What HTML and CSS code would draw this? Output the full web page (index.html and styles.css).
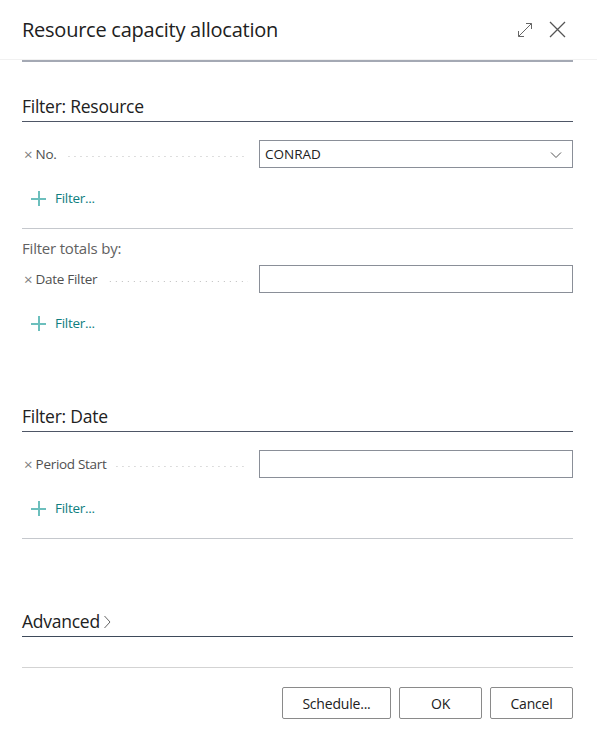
FILE: index.html
```html
<!DOCTYPE html>
<html>
<head>
<meta charset="utf-8">
<link rel="stylesheet" href="styles.css">
</head>
<body>
<div class="dialog">
  <div class="header">
    <div class="title">Resource capacity allocation</div>
    <div class="header-icons">
      <svg class="icon-expand" width="16" height="16" viewBox="0 0 16 16"><path d="M1.5 14.5 L14.5 1.5 M9 1.5 H14.5 V7 M1.5 9 V14.5 H7" fill="none" stroke="#666" stroke-width="1"/></svg>
      <svg class="icon-close" width="17" height="17" viewBox="0 0 17 17"><path d="M1 1 L16 16 M16 1 L1 16" fill="none" stroke="#555" stroke-width="1.3"/></svg>
    </div>
  </div>
  <div class="content">
    <div class="top-rule"></div>

    <div class="section first">
      <div class="section-title">Filter: Resource</div>
      <div class="row">
        <div class="label"><span class="x">×</span><span class="label-text">No.</span><span class="leader"></span></div>
        <div class="field select"><span class="value">CONRAD</span>
          <svg class="chev" width="12" height="8" viewBox="0 0 12 8"><path d="M1 1.5 L6 6.5 L11 1.5" fill="none" stroke="#555" stroke-width="1"/></svg>
        </div>
      </div>
      <div class="add-filter"><span class="plus"></span><span class="add-text">Filter...</span></div>
      <div class="rule"></div>
      <div class="subhead">Filter totals by:</div>
      <div class="row tight">
        <div class="label"><span class="x">×</span><span class="label-text">Date Filter</span><span class="leader"></span></div>
        <div class="field"></div>
      </div>
      <div class="add-filter"><span class="plus"></span><span class="add-text">Filter...</span></div>
    </div>

    <div class="section second">
      <div class="section-title">Filter: Date</div>
      <div class="row">
        <div class="label"><span class="x">×</span><span class="label-text">Period Start</span><span class="leader"></span></div>
        <div class="field"></div>
      </div>
      <div class="add-filter"><span class="plus"></span><span class="add-text">Filter...</span></div>
      <div class="rule"></div>
    </div>

    <div class="section advanced">
      <div class="section-title adv">Advanced<svg class="adv-chev" width="8" height="14" viewBox="0 0 8 14"><path d="M1.5 1 L7 7 L1.5 13" fill="none" stroke="#666" stroke-width="1"/></svg></div>
    </div>

    <div class="footer-rule"></div>
    <div class="buttons">
      <button class="btn schedule">Schedule...</button>
      <button class="btn ok">OK</button>
      <button class="btn cancel">Cancel</button>
    </div>
  </div>
</div>
</body>
</html>
```

FILE: styles.css
```css
html, body {
  margin: 0;
  padding: 0;
  background: #ffffff;
}
body {
  font-family: "Open Sans", "Noto Sans", sans-serif;
  color: #212121;
  width: 597px;
  height: 741px;
  overflow: hidden;
}
.dialog {
  width: 597px;
}
.header {
  height: 59px;
  display: flex;
  align-items: center;
  justify-content: space-between;
  padding: 0 31px 0 22px;
  border-bottom: 1px solid #f1f1f1;
}
.title {
  font-size: 20px;
  color: #212121;
  letter-spacing: -0.25px;
  margin-top: 0;
}
.header-icons {
  display: flex;
  align-items: center;
  gap: 16px;
}
.icon-expand { margin-top: 1px; }
.content {
  padding: 0 24px 0 22px;
}
.top-rule {
  height: 2px;
  background: #a4a9b4;
}
.section.first {
  padding-top: 32px;
}
.section-title {
  font-size: 17.5px;
  font-weight: 500;
  color: #212121;
  letter-spacing: -0.25px;
  line-height: 24px;
  padding-bottom: 3px;
  border-bottom: 1px solid #4e5666;
}
.row {
  display: flex;
  align-items: center;
  margin-top: 18px;
  height: 28px;
}
.row.tight {
  margin-top: 7px;
}
.label {
  width: 237px;
  flex: none;
  display: flex;
  align-items: center;
  font-size: 13.5px;
  color: #505050;
  padding-left: 2px;
  box-sizing: border-box;
}
.x {
  font-size: 15px;
  color: #808080;
  margin-right: 3px;
  line-height: 1;
}
.label-text {
  letter-spacing: -0.3px;
  margin-right: 8px;
}
.leader {
  flex: 1;
  height: 1px;
  margin-top: 4px;
  margin-right: 11px;
  background-image: linear-gradient(to right, #bdbdbd 1px, transparent 1px);
  background-size: 6px 1px;
  background-repeat: repeat-x;
  background-position: right center;
}
.field {
  flex: 1;
  height: 28px;
  border: 1px solid #8a8f98;
  box-sizing: border-box;
  display: flex;
  align-items: center;
  justify-content: space-between;
  padding: 0 10px 0 5px;
}
.value {
  font-size: 13.5px;
  color: #212121;
  letter-spacing: 0;
}
.chev { margin-top: 1px; }
.add-filter {
  display: flex;
  align-items: center;
  height: 20px;
  margin-top: 20px;
  padding-left: 9px;
}
.plus {
  position: relative;
  width: 15px;
  height: 15px;
  margin-right: 9px;
}
.plus::before, .plus::after {
  content: "";
  position: absolute;
  background: #6cbfbd;
}
.plus::before {
  left: 0; right: 0; top: 7px; height: 2px;
}
.plus::after {
  top: 0; bottom: 0; left: 7px; width: 2px;
}
.add-text {
  font-size: 13.5px;
  color: #0e7e80;
  letter-spacing: -0.3px;
}
.rule {
  height: 1px;
  background: #c5c8cd;
  margin-top: 20px;
}
.subhead {
  font-size: 15px;
  color: #616161;
  margin-top: 9px;
  line-height: 20px;
  letter-spacing: -0.2px;
}
.section.second {
  padding-top: 71px;
}
.section.advanced {
  padding-top: 70px;
}
.section-title.adv {
  display: flex;
  align-items: center;
  border-bottom-color: #3e4a5a;
}
.adv-chev {
  margin-left: 3px;
  margin-top: 1px;
}
.footer-rule {
  height: 1px;
  background: #d3d3d3;
  margin-top: 30px;
}
.buttons {
  display: flex;
  justify-content: flex-end;
  gap: 8px;
  margin-top: 19px;
}
.btn {
  height: 32px;
  border: 1px solid #8a8a8a;
  background: #ffffff;
  font-family: "Open Sans", "Noto Sans", sans-serif;
  font-size: 14px;
  color: #212121;
  border-radius: 2px;
  padding: 0;
  letter-spacing: -0.2px;
}
.btn.schedule { width: 109px; }
.btn.ok { width: 83px; }
.btn.cancel { width: 83px; }
```
